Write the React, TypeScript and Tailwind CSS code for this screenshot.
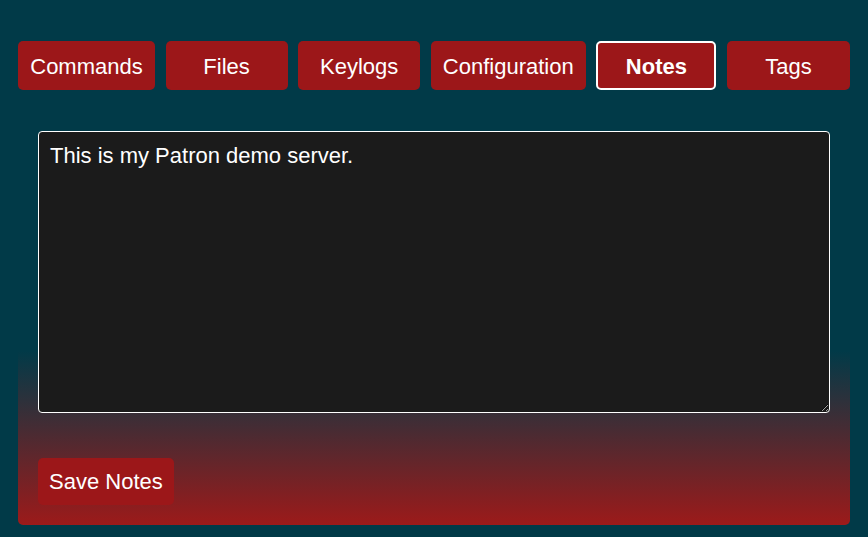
const tabs = [
  { label: 'Commands', width: 'w-[137px]' },
  { label: 'Files', width: 'w-[122px]' },
  { label: 'Keylogs', width: 'w-[122px]' },
  { label: 'Configuration', width: 'w-[155px]' },
  { label: 'Notes', width: 'w-[120px]', active: true },
  { label: 'Tags', width: 'w-[123px]' },
];

export default function App() {
  return (
    <div className="min-h-screen bg-[#013a48] px-[18px] pt-[41px] pb-[12px] font-['Liberation_Sans',Arial,sans-serif] text-white">
      <div className="flex justify-between">
        {tabs.map((t) => (
          <button
            key={t.label}
            className={
              t.active
                ? `${t.width} h-[49px] rounded-[5px] border-2 border-white bg-[#9c1719] pt-[2px] text-[22px] font-bold leading-none`
                : `${t.width} h-[49px] rounded-[5px] bg-[#9c1719] pt-[2px] text-[22px] leading-none`
            }
          >
            {t.label}
          </button>
        ))}
      </div>

      <div className="mt-[21px] rounded-[5px] bg-linear-to-b/srgb from-[#013a48] from-58% to-[#9c1a1a] p-[20px]">
        <textarea
          defaultValue="This is my Patron demo server."
          className="block h-[282px] w-full rounded-[4px] border border-white bg-[#1b1b1b] px-[11px] pt-[11px] pb-[9px] text-[22px] leading-[26px] text-white outline-none"
        />
        <button className="mt-[45px] block h-[47px] rounded-[5px] bg-[#9c1719] px-[11px] pt-[1px] text-[22px] leading-none text-white">
          Save Notes
        </button>
      </div>
    </div>
  );
}
